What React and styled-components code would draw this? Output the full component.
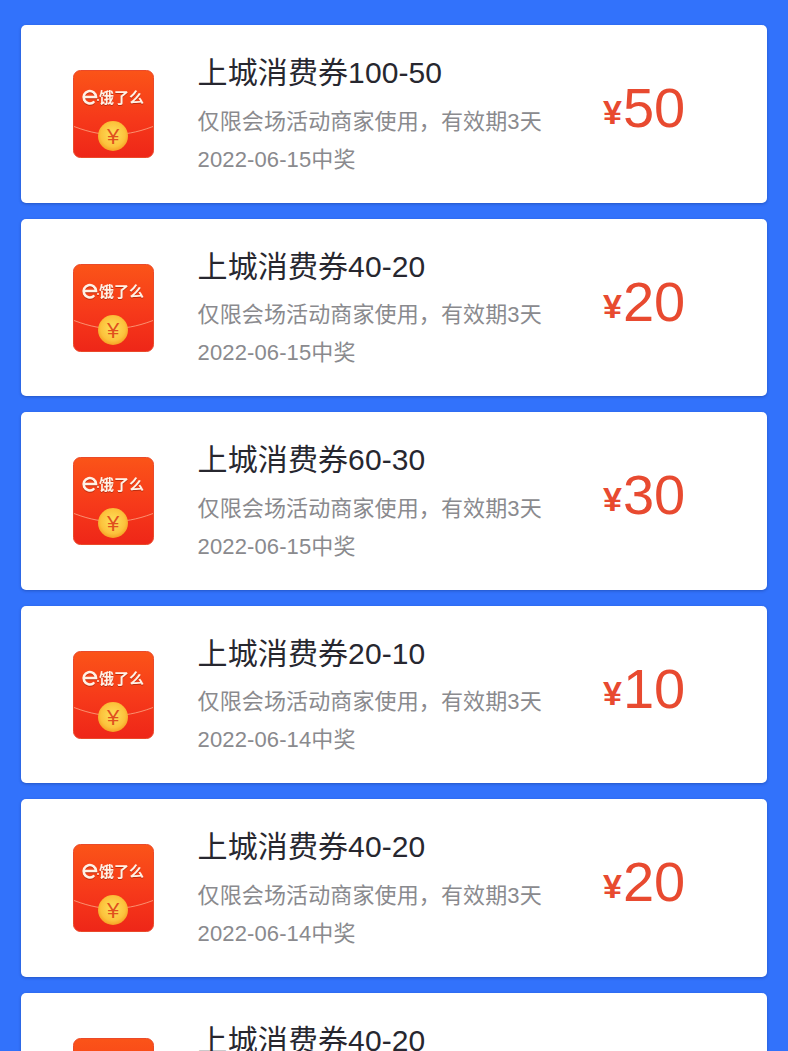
import React from "react";
import styled, { createGlobalStyle } from "styled-components";

const coupons = [
  { title: "上城消费券100-50", date: "2022-06-15", amount: 50 },
  { title: "上城消费券40-20", date: "2022-06-15", amount: 20 },
  { title: "上城消费券60-30", date: "2022-06-15", amount: 30 },
  { title: "上城消费券20-10", date: "2022-06-14", amount: 10 },
  { title: "上城消费券40-20", date: "2022-06-14", amount: 20 },
  { title: "上城消费券40-20", date: "2022-06-14", amount: 20 },
];

function Logo({ id }) {
  return (
    <LogoSvg viewBox="0 0 81 88" aria-hidden="true">
      <defs>
        <linearGradient id={`bg${id}`} x1="0" y1="0" x2="0" y2="1">
          <stop offset="0" stopColor="#fb5418" />
          <stop offset="0.55" stopColor="#f6391a" />
          <stop offset="1" stopColor="#ee2618" />
        </linearGradient>
        <radialGradient id={`coin${id}`} cx="0.5" cy="0.45" r="0.58">
          <stop offset="0" stopColor="#fee05a" />
          <stop offset="0.7" stopColor="#fcc23c" />
          <stop offset="1" stopColor="#f49a20" />
        </radialGradient>
      </defs>
      <rect x="0.5" y="0.5" width="80" height="87" rx="7" fill={`url(#bg${id})`} stroke="#ea4a2a" />
      <path d="M1 56.5 C 18 63, 30 64.5, 40 64.5 C 50 64.5, 63 63, 80 56.5" fill="none" stroke="#fb9a78" strokeWidth="0.9" />
      <LogoMark>
        <path
          d="M11.5 27 H23 A6.2 6.2 0 1 0 20.5 32.2"
          fill="none"
          stroke="#fff2e6"
          strokeWidth="2.6"
          strokeLinecap="round"
        />
        <circle cx="25" cy="30" r="1" fill="#fff2e6" />
        <LogoText x="26" y="33">饿了么</LogoText>
      </LogoMark>
      <circle cx="40" cy="66" r="15" fill={`url(#coin${id})`} />
      <CoinText x="40" y="74">¥</CoinText>
    </LogoSvg>
  );
}

export default function App() {
  return (
    <>
      <GlobalStyle />
      <Page>
        {coupons.map((c, i) => (
          <Card key={i}>
            <Logo id={i} />
            <Info>
              <Title>{c.title}</Title>
              <Desc>仅限会场活动商家使用，有效期3天</Desc>
              <Desc>{c.date}中奖</Desc>
            </Info>
            <Amount>
              <Yen>¥</Yen>
              {c.amount}
            </Amount>
          </Card>
        ))}
      </Page>
    </>
  );
}

const GlobalStyle = createGlobalStyle`
  html, body {
    margin: 0;
    padding: 0;
    height: 100%;
    overflow: hidden;
    background: #3272fb;
  }
`;
const Page = styled.div`
  height: 1051px;
  overflow: hidden;
  box-sizing: border-box;
  padding: 25.3px 21px 0;
  display: flex;
  flex-direction: column;
  gap: 16.1px;
  background: #3272fb;
  font-family: "Liberation Sans", "Noto Sans CJK SC", sans-serif;
`;
const Card = styled.div`
  flex: 0 0 177.4px;
  display: flex;
  align-items: flex-start;
  padding-left: 52px;
  background: #fff;
  border-radius: 5px;
  box-shadow: 0 1px 3px rgba(20, 50, 130, 0.45);
`;
const LogoSvg = styled.svg`
  flex: none;
  width: 81px;
  height: 88px;
  margin-top: 45px;
`;
const LogoMark = styled.g`
  filter: drop-shadow(0 1px 0 rgba(140, 30, 10, 0.55));
`;
const LogoText = styled.text`
  font-family: "Noto Sans CJK SC", sans-serif;
  font-size: 15px;
  font-weight: 700;
  fill: #fff2e6;
`;
const CoinText = styled.text`
  font-family: "Liberation Sans", sans-serif;
  font-size: 22px;
  text-anchor: middle;
  fill: #e0501e;
`;
const Info = styled.div`
  flex: none;
  width: 405.4px;
  margin-left: 43.6px;
  padding-top: 27.9px;
`;
const Title = styled.div`
  font-size: 30px;
  line-height: 40px;
  margin-bottom: 9.5px;
  letter-spacing: 0.1px;
  color: #27272f;
  white-space: nowrap;
`;
const Desc = styled.div`
  font-size: 22px;
  line-height: 38px;
  letter-spacing: 0.12px;
  color: #8a8a8e;
  white-space: nowrap;
`;
const Amount = styled.div`
  flex: none;
  margin-top: 47px;
  font-size: 56px;
  line-height: 72px;
  color: #e84a30;
  white-space: nowrap;
`;
const Yen = styled.span`
  font-size: 34px;
  font-weight: 700;
  position: relative;
  top: -3px;
  margin-right: 1px;
`;
